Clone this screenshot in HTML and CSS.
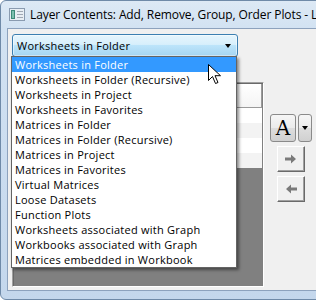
FILE: index.html
```html
<!DOCTYPE html>
<html>
<head>
<meta charset="utf-8">
<link rel="stylesheet" href="styles.css">
</head>
<body>
<div class="window">
  <div class="titlebar">
    <svg class="appicon" width="16" height="16" viewBox="0 0 16 16">
      <rect x="0.5" y="1.5" width="15" height="12" fill="#e8eef4" stroke="#8a9bb0"/>
      <rect x="2" y="3" width="4" height="9" fill="#3d8a7a"/>
      <rect x="3" y="4" width="2" height="7" fill="#7cc0b0"/>
      <rect x="8" y="4" width="6" height="1" fill="#a0a8b4"/>
      <rect x="8" y="7" width="6" height="1" fill="#a0a8b4"/>
      <rect x="8" y="10" width="6" height="1" fill="#a0a8b4"/>
    </svg>
    <span class="title">Layer Contents: Add, Remove, Group, Order Plots - Layer1</span>
  </div>
  <div class="client">
    <div class="combo">
      <span class="combo-text">Worksheets in Folder</span>
      <span class="combo-arrow"></span>
    </div>
    <div class="body-row">
      <div class="grid">
        <div class="grid-head"></div>
        <div class="grid-row"></div>
        <div class="grid-row alt"></div>
        <div class="grid-row"></div>
        <div class="grid-row alt"></div>
        <div class="grid-empty"></div>
      </div>
      <div class="tools">
        <div class="font-row">
          <div class="btn btn-a">A</div>
          <div class="btn btn-drop"><span class="small-arrow"></span></div>
        </div>
        <div class="btn btn-move">
          <svg width="12" height="10" viewBox="0 0 12 10"><path d="M0 3.5h6V0.5l5 4.5-5 4.5V6.5H0z" fill="#7a7a7a"/></svg>
        </div>
        <div class="btn btn-move">
          <svg width="12" height="10" viewBox="0 0 12 10"><path d="M12 3.5H6V0.5L1 5l5 4.5V6.5h6z" fill="#7a7a7a"/></svg>
        </div>
      </div>
    </div>
    <ul class="droplist">
      <li class="sel">Worksheets in Folder</li>
      <li>Worksheets in Folder (Recursive)</li>
      <li>Worksheets in Project</li>
      <li>Worksheets in Favorites</li>
      <li>Matrices in Folder</li>
      <li>Matrices in Folder (Recursive)</li>
      <li>Matrices in Project</li>
      <li>Matrices in Favorites</li>
      <li>Virtual Matrices</li>
      <li>Loose Datasets</li>
      <li>Function Plots</li>
      <li>Worksheets associated with Graph</li>
      <li>Workbooks associated with Graph</li>
      <li>Matrices embedded in Workbook</li>
    </ul>
    <svg class="cursor" width="13" height="21" viewBox="0 0 13 21">
      <path d="M0.5 0.5v16l4-4 3 7 2.5-1-3-6.8h5.5z" fill="#fff" stroke="#000" stroke-width="1" stroke-linejoin="miter"/>
    </svg>
  </div>
</div>
</body>
</html>
```
FILE: styles.css
```css
html, body {
  margin: 0;
  padding: 0;
}
body {
  width: 316px;
  height: 300px;
  overflow: hidden;
  background: #fff;
  font-family: "Open Sans", "Noto Sans", sans-serif;
  font-size: 11px;
}
.window {
  width: 380px;
  height: 300px;
  box-sizing: border-box;
  border: 1px solid #6f8aa8;
  border-radius: 6px 6px 6px 6px;
  background: linear-gradient(#dde9f5 0, #d2e2f2 28px, #c4d7ec 100%);
  padding: 0 7px 8px 6px;
  display: flex;
  flex-direction: column;
}
.titlebar {
  height: 27px;
  display: flex;
  align-items: center;
  padding-left: 2px;
  flex: none;
}
.appicon {
  flex: none;
}
.title {
  margin-left: 5px;
  font-size: 12px;
  color: #000;
  white-space: nowrap;
  letter-spacing: -0.1px;
}
.client {
  position: relative;
  flex: 1;
  background: #f0f0f0;
  border: 1px solid #8da2bd;
  padding: 5px 0 3px 4px;
  display: flex;
  flex-direction: column;
}
.combo {
  width: 226px;
  height: 23px;
  box-sizing: border-box;
  border: 1px solid #3c7fb1;
  border-radius: 3px;
  background: linear-gradient(#e6f5fc 0, #d7effc 45%, #bce4fa 50%, #a5d5f2 100%);
  display: flex;
  align-items: center;
  padding: 0 6px 0 4px;
  box-shadow: inset 0 0 0 1px rgba(255,255,255,0.5);
}
.combo-text {
  flex: 1;
  color: #000;
  font-size: 11px;
  letter-spacing: 0.25px;
}
.combo-arrow {
  width: 0;
  height: 0;
  border-left: 3.5px solid transparent;
  border-right: 3.5px solid transparent;
  border-top: 4px solid #000;
}
.body-row {
  display: flex;
  margin-top: 25px;
  flex: 1;
}
.grid {
  width: 252px;
  box-sizing: border-box;
  border: 1px solid #a0a0a0;
  border-right-color: #fff;
  border-bottom-color: #fff;
  box-shadow: inset 1px 1px 0 #696969;
  background: #808080;
  display: flex;
  flex-direction: column;
  padding: 1px 1px 1px 1px;
}
.grid-head {
  height: 24px;
  flex: none;
  background: linear-gradient(#fff, #f4f4f4);
  border-right: 1px solid #9a9a9a;
  border-bottom: 1px solid #9a9a9a;
  box-sizing: border-box;
}
.grid-row {
  height: 15px;
  flex: none;
  background: #fff;
}
.grid-row.alt {
  background: #f3f3f3;
}
.grid-empty {
  flex: 1;
}
.tools {
  margin-left: 6px;
  padding-top: 32px;
  display: flex;
  flex-direction: column;
  align-items: flex-start;
}
.font-row {
  display: flex;
  gap: 2px;
}
.btn {
  box-sizing: border-box;
  border: 1px solid #8a8a8a;
  border-radius: 3px;
  background: linear-gradient(#f6f6f6 0, #ebebeb 50%, #dddddd 51%, #d0d0d0 100%);
  display: flex;
  align-items: center;
  justify-content: center;
}
.btn-a {
  width: 26px;
  height: 28px;
  font-family: "DejaVu Serif", "Liberation Serif", serif;
  font-size: 20px;
  color: #000;
  font-weight: normal;
}
.btn-drop {
  width: 14px;
  height: 28px;
}
.small-arrow {
  width: 0;
  height: 0;
  border-left: 3.5px solid transparent;
  border-right: 3.5px solid transparent;
  border-top: 4px solid #000;
}
.btn-move {
  width: 28px;
  height: 26px;
  margin-left: 7px;
  margin-top: 4px;
  border-radius: 0;
  background: #f0f0f0;
  border: 1px solid #fff;
  border-right-color: #6a6a6a;
  border-bottom-color: #6a6a6a;
  box-shadow: inset -1px -1px 0 #a0a0a0;
}
.droplist {
  position: absolute;
  left: 3px;
  top: 27px;
  width: 226px;
  margin: 0;
  padding: 0;
  list-style: none;
  background: #fff;
  border: 1px solid #646464;
  box-sizing: border-box;
  box-shadow: 2px 2px 3px rgba(0,0,0,0.45);
}
.droplist li {
  height: 15px;
  line-height: 15px;
  padding-left: 3px;
  font-size: 11px;
  letter-spacing: 0.25px;
  color: #000;
  white-space: nowrap;
}
.droplist li.sel {
  background: #3399ff;
  color: #fff;
}
.cursor {
  position: absolute;
  left: 200px;
  top: 35px;
}
```
